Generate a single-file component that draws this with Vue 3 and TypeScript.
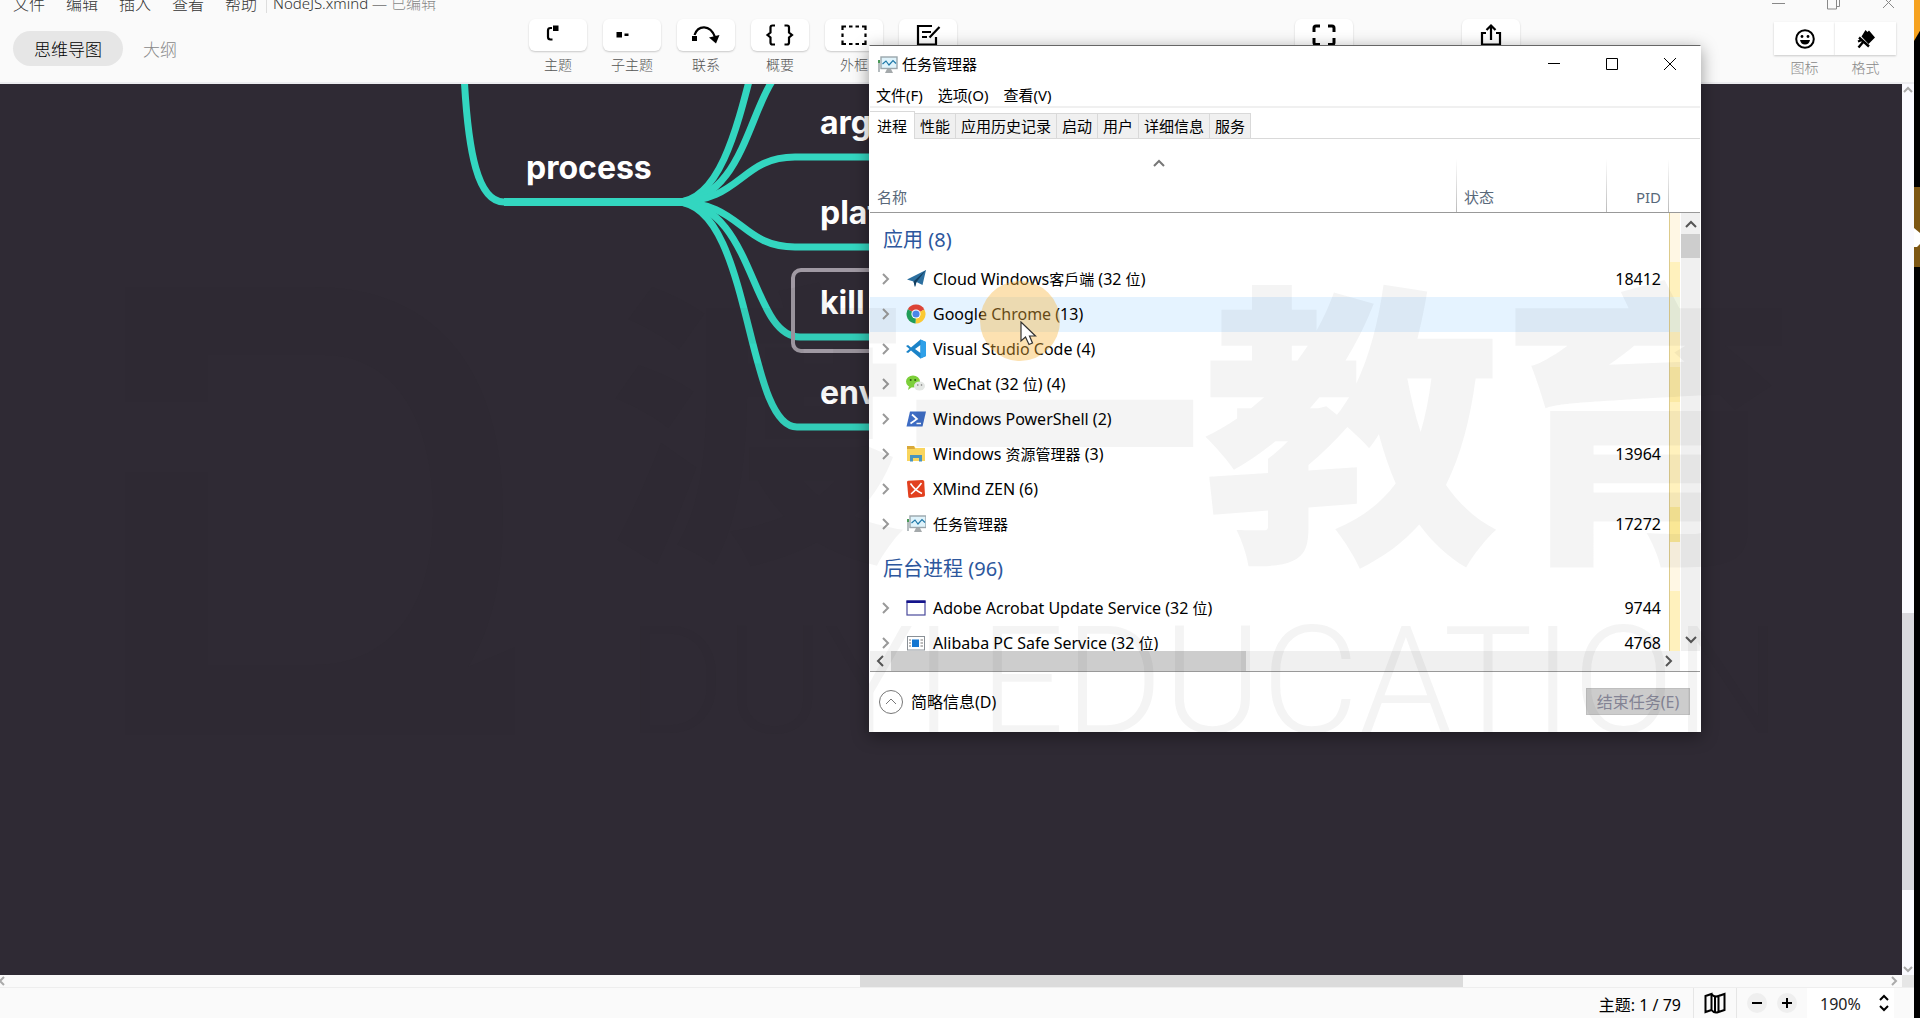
<script setup lang="ts">
import { ref } from 'vue'

interface Tool { label: string; icon: string }
interface Row { name: string; icon: string; pid?: string; heat?: string; hover?: boolean }
interface Group { title: string; rows: Row[] }

const stroke = 'fill="none" stroke="#000" stroke-width="2.2"'

const menus = ['文件', '编辑', '插入', '查看', '帮助']

const tools: Tool[] = [
  { label: '主题', icon: `<path d="M10 5H8.500Q6 5 6 7.500V14Q6 16.500 8.500 16.500H10.500" ${stroke}/><rect x="11" y="2.500" width="5.500" height="5.500"/>` },
  { label: '子主题', icon: '<rect x="0.500" y="9" width="5.500" height="5.500"/><rect x="8.500" y="10.500" width="4" height="2.500"/>' },
  { label: '联系', icon: `<rect x="2" y="13" width="5" height="5"/><path d="M4.500 12C8 2 20 1 25 14" ${stroke}/><path d="M19 14.500L29.500 12L26 20.500Z"/>` },
  { label: '概要', icon: `<path d="M11 2.500H8.500Q6.500 2.500 6.500 4.500V9.500L3.500 12L6.500 14.500V19.500Q6.500 21.500 8.500 21.500H11M20.500 2.500h2.500q2 0 2 2V9.500l3 2.500l-3 2.500V19.500q0 2-2 2H20.500" ${stroke}/>` },
  { label: '外框', icon: `<path d="M4.500 7V3.500H8M11 3.500h3.500M17.500 3.500h3.500M24 3.500H27.500V7M27.500 10.500v3.500M27.500 17.500V21H24M21 21h-3.500M14.500 21h-3.500M8 21H4.500V17.500M4.500 14v-3.500" ${stroke}/>` },
  { label: '笔记', icon: `<path d="M20 3H6V21.500H24V14M10 9h9M10 14h5" ${stroke}/><path d="M27.500 4L17.500 14.500" ${stroke}/>` },
]

const fullIcon = `<path d="M4 9V5Q4 3 6 3H10M18 3H22Q24 3 24 5V9M24 15V19.500Q24 21.500 22 21.500H18M10 21.500H6Q4 21.500 4 19.500V15" fill="none" stroke="#000" stroke-width="3"/>`
const shareIcon = `<path d="M9 10H5V21.500H23V10H19M14 17V3M9.500 7L14 2.500L18.500 7" ${stroke}/>`

const monitor = '<rect x="4" y="2" width="16" height="11.500" fill="#dff3fb" stroke="#9aa6ac" stroke-width="1.400"/><path d="M5.500 9l3.500-3 3 4 4-4.500 3 3" fill="none" stroke="#1f78a8" stroke-width="1.200"/><path d="M10 14h4l2 4H8z" fill="#a4a9ab"/><path d="M1 5h2v12H1z" fill="#b5bcbf"/><path d="M1 5h2v3H1z" fill="#4a9a58"/>'

const groups: Group[] = [
  {
    title: '应用 (8)',
    rows: [
      { name: 'Cloud Windows客戶端 (32 位)', pid: '18412', icon: '<path d="M1 10.500L20 1L16.500 16L10.500 13L9 18L7.500 12.500Z" fill="#2c6f9f"/><path d="M7.500 12.500L20 1L10.500 13L9 18Z" fill="#143f60"/>' },
      { name: 'Google Chrome (13)', heat: 'cool', hover: true, icon: '<circle cx="10" cy="10" r="9.500" fill="#e3e3e3"/><path d="M10 10L1.800 5.200A9.500 9.500 0 0 1 18.300 5.500Z" fill="#dc4437"/><path d="M10 10L18.300 5.500A9.500 9.500 0 0 1 9.500 19.500Z" fill="#fbc932"/><path d="M10 10L9.500 19.500A9.500 9.500 0 0 1 1.800 5.200Z" fill="#1f9d58"/><circle cx="10" cy="10" r="4.600" fill="#fff"/><circle cx="10" cy="10" r="3.600" fill="#4a86e8"/>' },
      { name: 'Visual Studio Code (4)', icon: '<path d="M14.500 0.500L20 3V17L14.500 19.500L5 11.500L2 14L0 13L3.500 10L0 7L2 6L5 8.500ZM14.500 6L9 10L14.500 14Z" fill="#1b83c8" fill-rule="evenodd"/><path d="M14.500 0.500L20 3V17L14.500 19.500Z" fill="#2fa0e8"/>' },
      { name: 'WeChat (32 位) (4)', heat: 'warm', icon: '<ellipse cx="7" cy="7.500" rx="7" ry="6" fill="#7ccf3a"/><path d="M3 12l-1 4 4-3z" fill="#7ccf3a"/><ellipse cx="13.500" cy="12" rx="5.500" ry="4.500" fill="#e4e7e4"/><circle cx="4.700" cy="6" r="1" fill="#2f5d12"/><circle cx="9.200" cy="6" r="1" fill="#2f5d12"/><circle cx="11.800" cy="11" r="0.800" fill="#777"/><circle cx="15.500" cy="11" r="0.800" fill="#777"/>' },
      { name: 'Windows PowerShell (2)', icon: '<path d="M4 2.500H20L16.500 17.500H0.500Z" fill="#3d6cc4"/><path d="M6 5.500l5 4.500-6.500 4.500M10.500 14.500h4.500" fill="none" stroke="#fff" stroke-width="1.700"/>' },
      { name: 'Windows 资源管理器 (3)', pid: '13964', icon: '<path d="M1 2h7l1.500 2H19v13H1z" fill="#f9d55e"/><path d="M1 2h7l1 3H1z" fill="#d9a93a"/><path d="M4 17.500V11h12v6.500h-3V14H7v3.500z" fill="#4a94bd"/>' },
      { name: 'XMind ZEN (6)', icon: '<path d="M1 3Q1 2 2 1.800L16.500 1Q18 1 18.200 2.500L19 16Q19 17.500 17.500 17.800L4 19Q2.500 19 2.300 17.500Z" fill="#e2401f"/><path d="M4.500 4.500Q9 11.500 16 14.500M15.500 4Q12 9 5 15" fill="none" stroke="#fff" stroke-width="1.500"/>' },
      { name: '任务管理器', pid: '17272', heat: 'hot', icon: monitor },
    ],
  },
  {
    title: '后台进程 (96)',
    rows: [
      { name: 'Adobe Acrobat Update Service (32 位)', pid: '9744', icon: '<rect x="1" y="3" width="18" height="14" fill="#fff" stroke="#4a4a9c" stroke-width="1.200"/><rect x="0.500" y="2.500" width="19" height="2.500" fill="#14148c"/>' },
      { name: 'Alibaba PC Safe Service (32 位)', pid: '4768', icon: '<rect x="1.500" y="3.500" width="17" height="13.500" fill="#fff" stroke="#8a9096"/><rect x="6" y="6.500" width="7" height="7.500" fill="#1576d0"/><path d="M3 7h2M3 10h2M3 13h2M14.500 7h2.500M14.500 10h2.500M14.500 13h2.500" stroke="#777"/>' },
    ],
  },
]

/* Latin and Han runs alternate; Han runs land on the odd indexes. */
const runs = (s: string) => s.split(/([\u4e00-\u9fff]+)/)

const tabs = ['进程', '性能', '应用历史记录', '启动', '用户', '详细信息', '服务']
const tmMenus = ['文件(F)', '选项(O)', '查看(V)']
const activeTab = ref('进程')
const zoom = ref('190%')

const nodes = [
  { text: 'process', x: 526, y: 64 },
  { text: 'argv', x: 820, y: 19 },
  { text: 'platform', x: 820, y: 109 },
  { text: 'kill', x: 820, y: 199 },
  { text: 'env', x: 820, y: 289 },
]

const branches = [
  'M464 -10C468 70 478 118 504 118H680',
  'M676 118C752 118 749 -108 797 -108H900',
  'M676 118C755 118 750 -18 795 -18H900',
  'M676 118C742 118 740 73 795 73H900',
  'M676 118C742 118 740 163 795 163H900',
  'M676 118C755 118 750 253 800 253H900',
  'M676 118C752 118 745 343 797 343H900',
]
</script>

<template>
  <div class="screen">
    <div class="app">
      <header class="top">
        <nav class="menubar">
          <button v-for="m in menus" :key="m">{{ m }}</button>
          <p class="doc">NodeJS.xmind <span>— 已编辑</span></p>
          <div class="sys">
            <button aria-label="最小化"><svg width="14" height="14"><path d="M0 7.500H13" /></svg></button>
            <button aria-label="还原"><svg width="14" height="14"><path d="M3.500 3V0.500H12.500V10.500H10M0.500 3.500H9.500V13H0.500Z" /></svg></button>
            <button aria-label="关闭"><svg width="14" height="14"><path d="M1 1L12 12M12 1L1 12" /></svg></button>
          </div>
        </nav>
        <div class="views">
          <button class="view on">思维导图</button>
          <button class="view">大纲</button>
        </div>
        <div class="tools">
          <button v-for="t in tools" :key="t.label" class="tool">
            <span class="face"><svg width="32" height="24" viewBox="0 0 32 24" v-html="t.icon"></svg></span>
            {{ t.label }}
          </button>
        </div>
        <div class="tools far">
          <button class="tool" aria-label="全屏"><span class="face"><svg width="28" height="24" viewBox="0 0 28 24" v-html="fullIcon"></svg></span></button>
          <button class="tool" aria-label="分享"><span class="face"><svg width="28" height="24" viewBox="0 0 28 24" v-html="shareIcon"></svg></span></button>
        </div>
        <div class="pair">
          <button>
            <span class="half"><svg width="24" height="24" viewBox="0 0 24 24"><circle cx="12" cy="12" r="8.800" fill="none" stroke="#000" stroke-width="2" /><circle cx="9" cy="9.500" r="1.400" /><circle cx="15" cy="9.500" r="1.400" /><path d="M7 13H17Q16 17.500 12 17.500T7 13Z" /></svg></span>
            图标
          </button>
          <button>
            <span class="half"><svg width="24" height="24" viewBox="0 0 24 24"><path d="M11.500 3L13.500 5L15 3.500L21 10.500L14.500 17L7.500 9.500Z" /><path d="M5 10.500L15 19.500M9.500 14.500L4.500 20.500M8 13L4 14.500" fill="none" stroke="#000" stroke-width="2.400" /></svg></span>
            格式
          </button>
        </div>
      </header>

      <main class="stage">
        <div class="canvas">
          <svg class="links" width="900" height="500" fill="none" stroke="#33d6c0" stroke-width="7">
            <path v-for="b in branches" :key="b" :d="b" />
            <path d="M504 118H690" stroke-width="8" />
          </svg>
          <div class="selected"></div>
          <span v-for="n in nodes" :key="n.text" class="node" :style="{ left: n.x + 'px', top: n.y + 'px' }">{{ n.text }}</span>
        </div>
        <div class="vbar">
          <svg width="12" height="12"><path d="M2 8L6 4L10 8" /></svg>
          <i></i>
          <svg width="12" height="12"><path d="M2 4L6 8L10 4" /></svg>
        </div>
      </main>
      <div class="hbar">
        <svg width="12" height="12"><path d="M4 2L0 6L4 10" /></svg>
        <i></i>
        <svg width="12" height="12"><path d="M4 2L8 6L4 10" /></svg>
        <b></b>
      </div>

      <footer class="status">
        <span class="count">主题: 1 / 79</span>
        <button class="map" aria-label="导航"><svg width="24" height="24" viewBox="0 0 24 24"><path d="M2.500 5L8.500 3V19L2.500 21ZM8.500 3Q11 6.500 15.500 5V21Q11 22.500 8.500 19M15.500 5L21.500 3V19L15.500 21M12 5.500V21.500" fill="none" stroke="#000" stroke-width="2" /></svg></button>
        <div class="zoomers">
          <button aria-label="缩小"><svg width="10" height="10"><path d="M0 5H10" /></svg></button>
          <button aria-label="放大"><svg width="10" height="10"><path d="M0 5H10M5 0V10" /></svg></button>
        </div>
        <label class="zoom">
          <select v-model="zoom" aria-label="缩放比例"><option>100%</option><option>190%</option></select>
          <svg width="12" height="18"><path d="M2 6L6 2L10 6M2 12L6 16L10 12" /></svg>
        </label>
      </footer>
    </div>
    <aside class="edge">
      <i class="sun"></i>
      <svg width="6" height="80"><path d="M0 0H6V80H0Z" fill="#7d5714" /><path d="M0 41L6 46V57L3 60H0Z" fill="#fff" /></svg>
    </aside>

    <section class="win">
      <div class="title">
        <svg width="21" height="19" viewBox="0 0 21 19" v-html="monitor"></svg>
        <h1>任务管理器</h1>
        <button aria-label="最小化"><svg width="14" height="14"><path d="M1 6.500H13" /></svg></button>
        <button aria-label="最大化"><svg width="14" height="14"><path d="M1.500 1.500H12.500V12.500H1.500Z" /></svg></button>
        <button aria-label="关闭"><svg width="14" height="14"><path d="M1 1L13 13M13 1L1 13" /></svg></button>
      </div>
      <nav class="tm-menu"><button v-for="m in tmMenus" :key="m">{{ m }}</button></nav>
      <div class="tabs">
        <button v-for="t in tabs" :key="t" :class="{ on: t === activeTab }" @click="activeTab = t">{{ t }}</button>
      </div>
      <div class="pane">
        <div class="list">
          <table>
            <colgroup><col /><col class="c-state" /><col class="c-pid" /><col class="c-heat" /></colgroup>
            <thead>
              <tr>
                <th>名称<svg class="sort" width="12" height="8"><path d="M1 7L6 2L11 7" /></svg></th>
                <th>状态</th>
                <th class="num">PID</th>
                <th class="last"></th>
              </tr>
            </thead>
            <tbody v-for="g in groups" :key="g.title">
              <tr class="group"><td colspan="3">{{ g.title }}</td><td class="heat pale"></td></tr>
              <tr v-for="r in g.rows" :key="r.name" :class="{ hover: r.hover }">
                <td>
                  <div class="name">
                    <svg class="chev" width="8" height="12"><path d="M1 1L6 6L1 11" /></svg>
                    <svg width="20" height="20" viewBox="0 0 20 20" v-html="r.icon"></svg>
                    <p><span v-for="(part, i) in runs(r.name)" :key="i" :class="{ han: i % 2 === 1 }">{{ part }}</span></p>
                  </div>
                </td>
                <td></td>
                <td class="num">{{ r.pid }}</td>
                <td class="heat" :class="r.heat"></td>
              </tr>
            </tbody>
          </table>
        </div>
        <div class="rail">
          <div class="rail-head"></div>
          <div class="rail-body">
            <svg width="12" height="8"><path d="M1 7L6 2L11 7" /></svg>
            <i></i>
            <svg class="down" width="12" height="8"><path d="M1 1L6 6L11 1" /></svg>
          </div>
        </div>
      </div>
      <div class="hrail">
        <svg width="8" height="12"><path d="M7 1L2 6L7 11" /></svg>
        <i></i>
        <svg class="right" width="8" height="12"><path d="M1 1L6 6L1 11" /></svg>
      </div>
      <div class="foot">
        <button class="brief">
          <svg width="24" height="24"><circle cx="12" cy="12" r="11.500" /><path d="M7 14L12 9L17 14" /></svg>
          简略信息(D)
        </button>
        <button class="end" disabled>结束任务(E)</button>
      </div>
    </section>

    <div class="halo"></div>
    <svg class="pointer" width="18" height="26" viewBox="0 0 18 26"><path d="M1 1V20L5.500 16L9 23.500L12.500 22L9.500 15H15.500Z" fill="#fff" stroke="#333" stroke-width="1.200" /></svg>

    <div class="mark">
      <svg width="392" height="448" viewBox="0 0 392 448"><path fill-rule="evenodd" d="M2 0H190C320 0 380 90 380 225C380 290 370 340 345 380L392 360V448H2V185H85V378H190C260 378 310 330 310 225C310 130 270 68 200 68H85V115H2Z" /></svg>
      <div class="brand">
        <p class="cn">渡一教育</p>
        <p class="en"><span>DUYI</span><span>EDUCATION</span></p>
      </div>
    </div>
  </div>
</template>

<style>
body { margin: 0; overflow: hidden; background: #000; }
</style>

<style scoped>
.screen { position: relative; display: flex; height: 100vh; overflow: hidden; font-family: "Noto Sans", "Noto Sans CJK SC", sans-serif; font-size: 15px; line-height: 20px; color: #000; }
button { border: 0; padding: 0; margin: 0; background: none; font: inherit; color: inherit; }
p, h1 { margin: 0; }
svg { display: block; flex: none; }
.app { flex: 1; min-width: 0; display: flex; flex-direction: column; background: #fafafa; }

.top { position: relative; height: 82px; border-bottom: 2px solid #ededf0; font-family: "Noto Sans CJK SC", sans-serif; font-weight: 300; }
.menubar { display: flex; align-items: center; gap: 21px; height: 24px; margin-top: -9px; padding-left: 13px; font-size: 16px; color: #333; }
.doc { margin-left: -12px; padding-left: 6px; border-left: 1px solid #ddd; font-size: 15px; font-family: "Noto Sans", "Noto Sans CJK SC", sans-serif; }
.doc span { color: #888; }
.sys { display: flex; gap: 41px; margin-left: auto; padding-right: 18px; }
.sys path { fill: none; stroke: #888; }
.views { display: flex; align-items: center; gap: 4px; margin: 16px 0 0 13px; font-size: 17px; }
.view { height: 35px; padding: 0 16px; color: #888; }
.view.on { width: 110px; border-radius: 18px; background: #e6e6e6; color: #000; padding: 0; }
.tools { position: absolute; left: 529px; top: 19px; display: flex; gap: 16px; font-size: 14px; color: #555; }
.tools.far { left: 1295px; gap: 109px; }
.tool { width: 58px; line-height: 26px; }
.face { display: flex; align-items: center; justify-content: center; height: 32px; border-radius: 6px; background: #fff; box-shadow: 0 1px 2px #0003; }
.pair { position: absolute; right: 18px; top: 22px; display: flex; font-size: 14px; color: #888; }
.pair button { width: 61px; line-height: 24px; }
.half { display: flex; align-items: center; justify-content: center; height: 33px; background: #fff; box-shadow: 0 1px 2px #0003; }

.stage { flex: 1; min-height: 0; display: flex; }
.canvas { position: relative; flex: 1; overflow: hidden; background: #2f2a34; }
.links { position: absolute; left: 0; top: 0; }
.selected { position: absolute; left: 791px; top: 184px; width: 140px; height: 77px; border: 4px solid #a099a3; border-radius: 10px; }
.node { position: absolute; font: 700 32px/40px Inter, sans-serif; color: #fff; }
.vbar { display: flex; flex-direction: column; width: 12px; background: #fafaff; }
.vbar i { height: 277px; margin-top: 517px; background: #dad9de; }
.vbar svg:last-child { margin-top: auto; }
.vbar path, .hbar path { fill: none; stroke: #aaa; stroke-width: 2; }
.hbar { display: flex; height: 12px; }
.hbar i { width: 603px; margin-left: 848px; background: #dbdbdb; }
.hbar svg:nth-of-type(2) { margin-left: auto; }
.hbar b { width: 12px; margin-left: 2px; background: #e6e6e6; }
.status { display: flex; justify-content: flex-end; height: 31px; box-sizing: border-box; border-top: 1px solid #eee; padding-right: 20px; font-size: 16px; line-height: 34px; }
.count { padding-right: 12px; border-right: 1px solid #e6e6e6; }
.map { width: 43px; display: flex; align-items: center; justify-content: center; border-right: 1px solid #e6e6e6; }
.zoomers { display: flex; align-items: center; gap: 10px; padding: 0 10px; }
.zoomers button { width: 20px; height: 20px; border-radius: 50%; background: #efefef; display: flex; align-items: center; justify-content: center; }
.zoomers path, .zoom path { fill: none; stroke: #000; stroke-width: 2; }
.zoom { display: flex; align-items: center; width: 87px; background: #fff; }
.zoom select { appearance: none; width: 71px; padding: 2px 0 0 13px; border: 0; background: none; font: inherit; color: #222; }

.edge { width: 6px; background: #000; overflow: hidden; }
.sun { display: block; height: 41px; margin-bottom: 146px; background: #f6a21f; clip-path: polygon(0 0, 100% 0, 100% 75%, 0 100%); }

.win { position: absolute; left: 869px; top: 45px; width: 832px; box-sizing: border-box; border: 1px solid #fff; border-top-color: #666; background: #fff; box-shadow: 0 4px 16px #0006; }
.title { display: flex; align-items: center; height: 36px; padding: 0 1px 0 7px; }
.title h1 { flex: 1; margin-left: 4px; font-size: 15px; font-weight: 400; }
.title button { width: 58px; display: flex; justify-content: center; }
.title button path { fill: none; stroke: #000; }
.tm-menu { display: flex; align-items: flex-end; gap: 15px; height: 24px; padding: 0 6px; border-bottom: 2px solid #f0f0f0; }
.tm-menu button { line-height: 22px; }
.tabs { display: flex; align-items: flex-end; height: 31px; box-sizing: border-box; border-bottom: 1px solid #d9d9d9; }
.tabs button { height: 25px; padding: 0 5px; background: #f0f0f0; border: 1px solid #d9d9d9; border-width: 1px 1px 0 0; line-height: 24px; }
.tabs button.on { height: 28px; width: 45px; margin-bottom: -1px; background: #fff; }
.pane { display: flex; height: 512px; overflow: hidden; }
.list { flex: 1; overflow: hidden; }
table { width: 100%; table-layout: fixed; border-collapse: separate; border-spacing: 0; }
.c-state { width: 150px; }
.c-pid { width: 62px; }
.c-heat { width: 11px; }
td, th { padding: 0; }
th { position: relative; height: 74px; box-sizing: border-box; padding: 0 7px 5px; border-bottom: 1px solid #999; text-align: left; vertical-align: bottom; font-weight: 400; color: #58687a; background: linear-gradient(#fff, #bbb) right bottom / 1px 53px no-repeat; }
th.last { background: none; }
.sort { position: absolute; right: 292px; top: 20px; }
.sort path, .brief path, .brief circle { fill: none; stroke: #777; }
.sort path { stroke-width: 2; }
.num { text-align: right; padding-right: 8px; }
td.num { padding-bottom: 2px; font-size: 16px; }
tbody tr { height: 35px; }
tr.group { height: 49px; }
.group td:first-child { padding: 5px 0 0 13px; font-size: 20px; color: #2d579d; }
.hover { background: #e5f3ff; }
.name { display: flex; align-items: center; height: 33px; padding: 0 0 2px 12px; white-space: pre; }
.name p { margin-left: 7px; font-size: 16px; }
.name .han { font-size: 15px; }
.chev { margin-right: 16px; }
.chev path { fill: none; stroke: #999; stroke-width: 2; }
.heat { background: #fff1bd; box-shadow: inset 1px 0 #ddcb8b; }
.heat.pale { background: #fff7e4; }
.heat.cool { background: #edf3df; }
.heat.warm { background: #fbe9a4; }
.heat.hot { background: #fae795; }
.rail { width: 20px; display: flex; flex-direction: column; }
.rail-head { height: 73px; border-bottom: 1px solid #999; }
.rail-body { flex: 1; display: flex; flex-direction: column; align-items: center; margin-left: 1px; padding: 7px 0; background: #f0f0f0; }
.rail-body i { width: 100%; height: 24px; margin-top: 6px; background: #cdcdcd; }
.down { margin-top: auto; }
.rail path, .hrail path { fill: none; stroke: #555; stroke-width: 2; }
.hrail { display: flex; align-items: center; height: 20px; margin-right: 20px; padding: 0 7px 0 6px; background: #f0f0f0; }
.hrail i { width: 355px; height: 20px; margin-left: 7px; background: #cdcdcd; }
.right { margin-left: auto; }
.foot { display: flex; align-items: center; justify-content: space-between; height: 59px; padding: 0 10px 0 9px; border-top: 1px solid #999; font-size: 16px; }
.brief { display: flex; align-items: center; gap: 8px; }
.end { width: 104px; height: 27px; background: #ccc; border: 1px solid #bfbfbf; color: #838394; }

.halo { position: absolute; left: 980px; top: 281px; width: 80px; height: 80px; border-radius: 50%; background: #f7b53c66; }
.pointer { position: absolute; left: 1020px; top: 321px; }
.mark { position: absolute; left: 123px; top: 287px; display: flex; color: #2522280d; fill: #2522280d; pointer-events: none; }
.brand { margin-left: 94px; width: 1190px; white-space: nowrap; }
.cn { height: 300px; font: 900 297px/246px "Noto Sans CJK SC", sans-serif; }
.en { display: flex; justify-content: space-between; padding: 0 18px; font: 300 150px/190px Roboto, sans-serif; }
</style>
